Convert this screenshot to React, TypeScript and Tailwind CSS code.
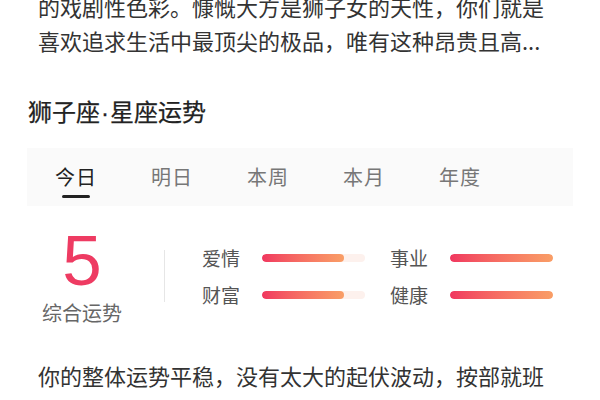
import React from "react";

const font = { fontFamily: '"Noto Sans CJK SC", "Noto Sans", sans-serif' };

function Bar({ fill }: { fill: number }) {
  return (
    <div className="h-[8px] w-[103px] rounded-full bg-[#fdf1ed] overflow-hidden">
      <div
        className="h-full rounded-full bg-gradient-to-r from-[#f0365f] to-[#f99e66]"
        style={{ width: `${fill}%` }}
      />
    </div>
  );
}

export default function App() {
  const tabs = ["今日", "明日", "本周", "本月", "年度"];
  return (
    <div className="w-[600px] h-[400px] overflow-hidden bg-white text-[#333]" style={font}>
      <p className="mt-[-11px] px-[38px] text-[22px] leading-[34px] text-[#333] whitespace-nowrap">
        的戏剧性色彩。慷慨大方是狮子女的天性，你们就是
        <br />
        喜欢追求生活中最顶尖的极品，唯有这种昂贵且高...
      </p>
      <h2 className="mt-[39px] pl-[28px] text-[24px] leading-[30px] font-normal text-[#222] [-webkit-text-stroke:0.25px_#222]">
        狮子座<span className="mx-[1px] font-['Liberation_Sans',sans-serif]">·</span>星座运势
      </h2>
      <div className="mt-[20px] mx-[27px]">
        <div className="h-[58px] bg-[#fafafa] flex items-start pl-[28px]">
          {tabs.map((t, i) => (
            <div key={t} className="w-[96px] flex flex-col items-start">
              <span
                className={`mt-[14px] text-[20px] leading-[30px] tracking-[1px] ${
                  i === 0 ? "text-[#222]" : "text-[#777]"
                }`}
              >
                {t}
              </span>
              {i === 0 && <div className="mt-[3px] ml-[7px] h-[3px] w-[28px] rounded-full bg-[#222]" />}
            </div>
          ))}
        </div>
        <div className="flex items-start pt-[24px]">
          <div className="ml-[10px] w-[90px] flex flex-col items-center">
            <span
              className="mt-[-5px] text-[71px] leading-[72px] text-[#ee3b62] font-normal"
              style={{ fontFamily: '"Liberation Sans", sans-serif' }}
            >
              5
            </span>
            <span className="mt-[3px] text-[20px] leading-[26px] text-[#666]">综合运势</span>
          </div>
          <div className="ml-[37px] mt-[20px] w-[1px] h-[52px] bg-[#e6e6e6]" />
          <div className="ml-[37px] mt-[15px] grid grid-cols-[60px_128px_60px_103px] gap-y-[11px] items-center">
            <span className="text-[19px] leading-[26px] text-[#555]">爱情</span>
            <Bar fill={80} />
            <span className="text-[19px] leading-[26px] text-[#555]">事业</span>
            <Bar fill={100} />
            <span className="text-[19px] leading-[26px] text-[#555]">财富</span>
            <Bar fill={80} />
            <span className="text-[19px] leading-[26px] text-[#555]">健康</span>
            <Bar fill={100} />
          </div>
        </div>
      </div>
      <p className="mt-[32px] px-[38px] text-[22px] leading-[34px] text-[#333] whitespace-nowrap">
        你的整体运势平稳，没有太大的起伏波动，按部就班
      </p>
    </div>
  );
}
